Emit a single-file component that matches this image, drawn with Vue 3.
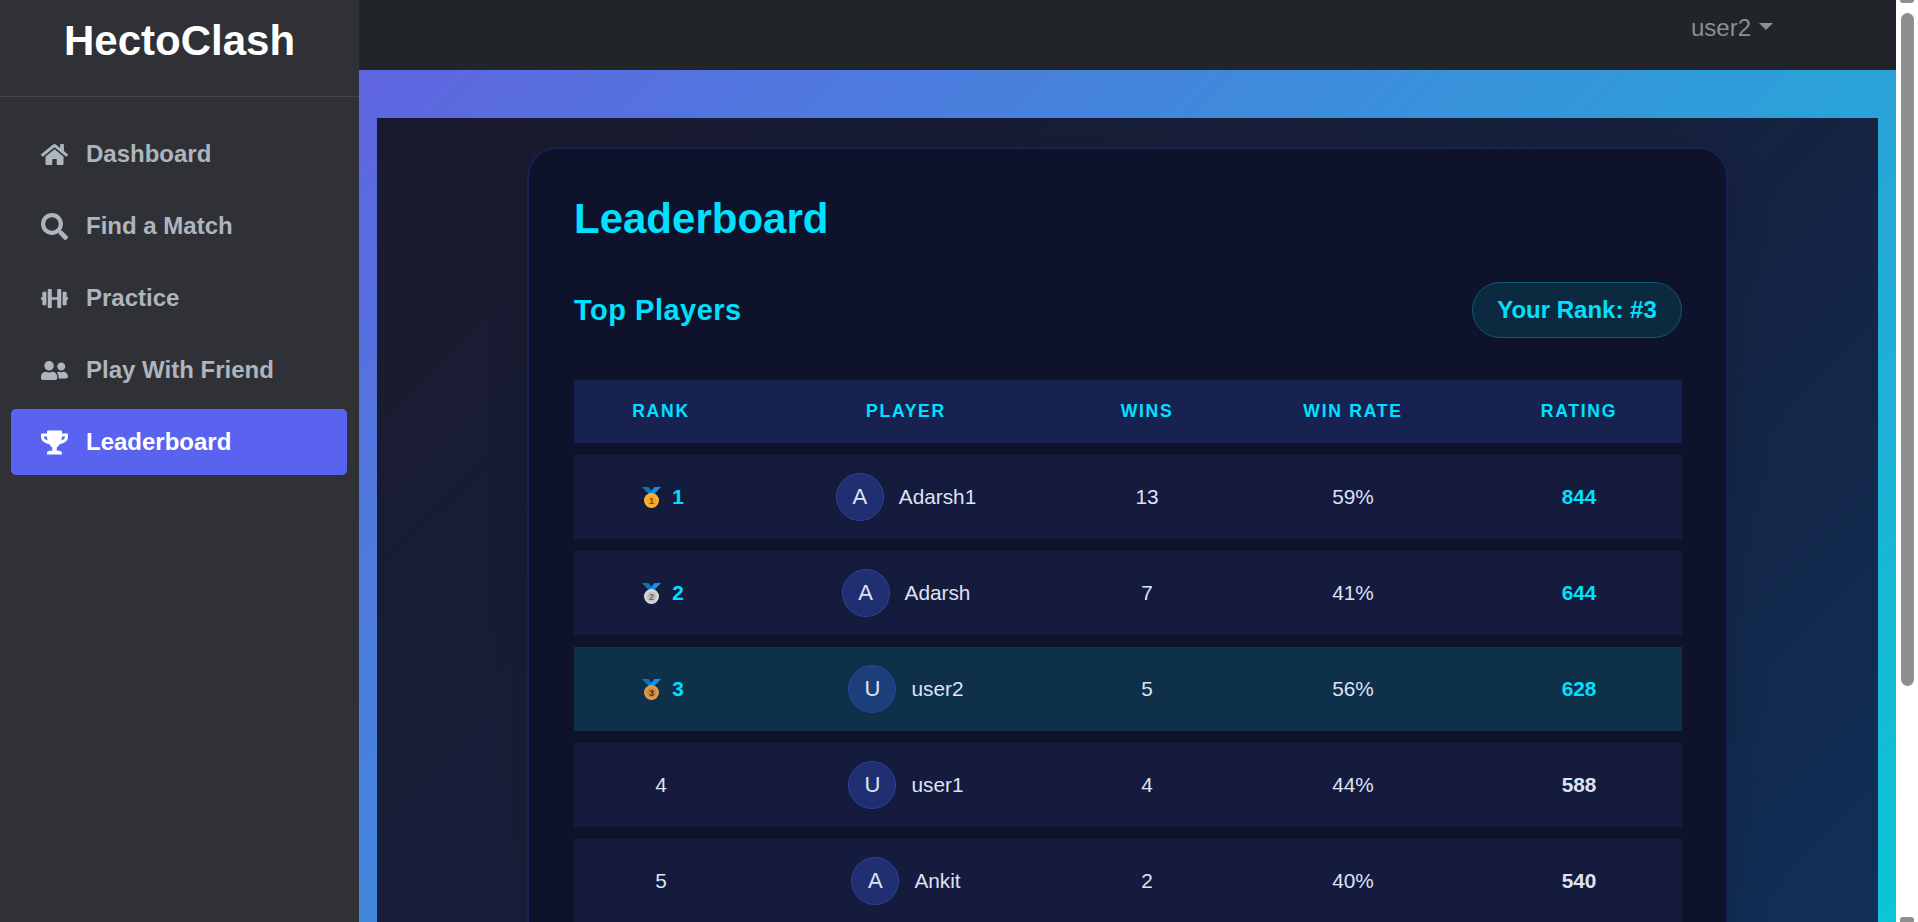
<template>
  <div class="app">
    <aside class="sidebar">
      <div class="brand">HectoClash</div>
      <nav class="side-nav">
        <a v-for="item in navItems" :key="item.label" class="nav-item" :class="{ active: item.active }">
          <svg class="nav-icon" :viewBox="item.box"><path :d="item.icon" /></svg>
          <span>{{ item.label }}</span>
        </a>
      </nav>
    </aside>

    <div class="main">
      <header class="topbar">
        <span class="user-menu">user2<i class="caret"></i></span>
      </header>
      <div class="content">
        <div class="panel">
          <section class="card">
            <h1>Leaderboard</h1>
            <div class="card-head">
              <h2>Top Players</h2>
              <div class="my-rank">Your Rank: #3</div>
            </div>
            <table>
              <colgroup>
                <col style="width: 174px">
                <col style="width: 316px">
                <col style="width: 166px">
                <col style="width: 246px">
                <col style="width: 206px">
              </colgroup>
              <thead>
                <tr>
                  <th>RANK</th>
                  <th>PLAYER</th>
                  <th>WINS</th>
                  <th>WIN RATE</th>
                  <th>RATING</th>
                </tr>
              </thead>
              <tbody>
                <tr v-for="p in players" :key="p.rank" :class="{ me: p.name === 'user2', top: p.rank <= 3 }">
                  <td class="rank">
                    <div class="rank-inner">
                      <svg v-if="p.rank <= 3" class="medal" viewBox="0 0 19 21">
                        <path d="M0 0h6.5l5 6-3 3z" fill="#0b74bd" />
                        <path d="M19 0h-6.5l-5 6 3 3z" fill="#1590e4" />
                        <circle cx="9.5" cy="13.5" r="7.5" :fill="medalColors[p.rank - 1][0]" />
                        <circle cx="9.5" cy="13.5" r="5" :fill="medalColors[p.rank - 1][1]" />
                        <text x="9.5" y="16.6" text-anchor="middle" class="medal-num" :class="'num-' + p.rank">{{ p.rank }}</text>
                      </svg>
                      <span>{{ p.rank }}</span>
                    </div>
                  </td>
                  <td>
                    <div class="player">
                      <span class="avatar">{{ p.name[0].toUpperCase() }}</span>
                      <span>{{ p.name }}</span>
                    </div>
                  </td>
                  <td>{{ p.wins }}</td>
                  <td>{{ p.rate }}</td>
                  <td class="rating">{{ p.rating }}</td>
                </tr>
              </tbody>
            </table>
          </section>
        </div>
      </div>
    </div>

    <div class="scrollbar">
      <i class="arrow up"></i>
      <div class="thumb"></div>
      <i class="arrow down"></i>
    </div>
  </div>
</template>

<script setup>
const navItems = [
  {
    label: 'Dashboard',
    box: '0 0 576 512',
    icon: 'M280.37 148.26L96 300.11V464a16 16 0 0 0 16 16l112.06-.29a16 16 0 0 0 15.92-16V368a16 16 0 0 1 16-16h64a16 16 0 0 1 16 16v95.64a16 16 0 0 0 16 16.05L464 480a16 16 0 0 0 16-16V300L295.67 148.26a12.19 12.19 0 0 0-15.3 0zM571.6 251.47L488 182.56V44.05a12 12 0 0 0-12-12h-56a12 12 0 0 0-12 12v72.61L318.47 43a48 48 0 0 0-61 0L4.34 251.47a12 12 0 0 0-1.6 16.9l25.5 31A12 12 0 0 0 45.15 301l235.22-193.74a12.19 12.19 0 0 1 15.3 0L530.9 301a12 12 0 0 0 16.9-1.6l25.5-31a12 12 0 0 0-1.7-16.93z'
  },
  {
    label: 'Find a Match',
    box: '0 0 512 512',
    icon: 'M505 442.7L405.3 343c-4.5-4.5-10.6-7-17-7H372c27.6-35.3 44-79.7 44-128C416 93.1 322.9 0 208 0S0 93.1 0 208s93.1 208 208 208c48.3 0 92.7-16.4 128-44v16.3c0 6.4 2.5 12.5 7 17l99.7 99.7c9.4 9.4 24.6 9.4 33.9 0l28.3-28.3c9.4-9.4 9.4-24.6.1-34zM208 336c-70.7 0-128-57.2-128-128 0-70.7 57.2-128 128-128 70.7 0 128 57.2 128 128 0 70.7-57.2 128-128 128z'
  },
  {
    label: 'Practice',
    box: '0 0 640 512',
    icon: 'M104 96H56c-13.3 0-24 10.7-24 24v104H8c-4.4 0-8 3.6-8 8v48c0 4.4 3.6 8 8 8h24v104c0 13.3 10.7 24 24 24h48c13.3 0 24-10.7 24-24V120c0-13.3-10.7-24-24-24zm528 128h-24V120c0-13.3-10.7-24-24-24h-48c-13.3 0-24 10.7-24 24v272c0 13.3 10.7 24 24 24h48c13.3 0 24-10.7 24-24V288h24c4.4 0 8-3.6 8-8v-48c0-4.4-3.6-8-8-8zM456 32h-48c-13.3 0-24 10.7-24 24v168H256V56c0-13.3-10.7-24-24-24h-48c-13.3 0-24 10.7-24 24v400c0 13.3 10.7 24 24 24h48c13.3 0 24-10.7 24-24V288h128v168c0 13.3 10.7 24 24 24h48c13.3 0 24-10.7 24-24V56c0-13.3-10.7-24-24-24z'
  },
  {
    label: 'Play With Friend',
    box: '0 0 640 512',
    icon: 'M192 256c61.9 0 112-50.1 112-112S253.9 32 192 32 80 82.1 80 144s50.1 112 112 112zm76.8 32h-8.3c-20.8 10-43.9 16-68.5 16s-47.6-6-68.5-16h-8.3C51.6 288 0 339.6 0 403.2V432c0 26.5 21.5 48 48 48h288c26.5 0 48-21.5 48-48v-28.8c0-63.6-51.6-115.2-115.2-115.2zM480 256c53 0 96-43 96-96s-43-96-96-96-96 43-96 96 43 96 96 96zm48 32h-3.8c-13.9 4.8-28.6 8-44.2 8s-30.3-3.2-44.2-8H432c-20.4 0-39.2 5.9-55.7 15.4 24.4 26.3 39.7 61.2 39.7 99.8v38.4c0 2.2-.5 4.3-.6 6.4H592c26.5 0 48-21.5 48-48 0-61.9-50.1-112-112-112z'
  },
  {
    label: 'Leaderboard',
    active: true,
    box: '0 0 576 512',
    icon: 'M552 64H448V24c0-13.3-10.7-24-24-24H152c-13.3 0-24 10.7-24 24v40H24C10.7 64 0 74.7 0 88v56c0 35.7 22.5 72.4 61.9 100.7 31.5 22.7 69.8 37.1 110 41.7C203.3 338.5 240 360 240 360v72h-48c-35.3 0-64 20.7-64 56v12c0 6.6 5.4 12 12 12h296c6.6 0 12-5.4 12-12v-12c0-35.3-28.7-56-64-56h-48v-72s36.7-21.5 68.1-73.6c40.3-4.6 78.6-19 110-41.7 39.3-28.3 61.9-65 61.9-100.7V88c0-13.3-10.7-24-24-24zM99.3 192.8C74.9 175.2 64 155.6 64 144v-16h64.2c1 32.6 5.8 61.2 12.8 86.2-15.1-5.2-29.2-12.4-41.7-21.4zM512 144c0 16.1-17.7 36.1-35.3 48.8-12.5 9-26.7 16.2-41.8 21.4 7-25 11.8-53.6 12.8-86.2H512v16z'
  }
]

const medalColors = [
  ['#ffb02e', '#f7a521'],
  ['#d6d6d6', '#c2c2c2'],
  ['#e09a4c', '#cf8a3e']
]

const players = [
  { rank: 1, name: 'Adarsh1', wins: 13, rate: '59%', rating: 844 },
  { rank: 2, name: 'Adarsh', wins: 7, rate: '41%', rating: 644 },
  { rank: 3, name: 'user2', wins: 5, rate: '56%', rating: 628 },
  { rank: 4, name: 'user1', wins: 4, rate: '44%', rating: 588 },
  { rank: 5, name: 'Ankit', wins: 2, rate: '40%', rating: 540 }
]
</script>

<style>
html, body {
  margin: 0;
  overflow: hidden;
}
</style>

<style scoped>
.app {
  display: flex;
  height: 100vh;
  overflow: hidden;
  font-family: "Liberation Sans", Arial, sans-serif;
  background: #fff;
}

/* sidebar */
.sidebar {
  flex: 0 0 359px;
  background: #303136;
}
.brand {
  height: 80px;
  padding-top: 16px;
  border-bottom: 1px solid #43454b;
  color: #fff;
  font-size: 42px;
  line-height: 50px;
  font-weight: 700;
  text-align: center;
}
.side-nav {
  display: flex;
  flex-direction: column;
  gap: 6px;
  padding: 24px 12px 0 11px;
}
.nav-item {
  display: flex;
  align-items: center;
  gap: 18px;
  height: 66px;
  padding-left: 30px;
  border-radius: 5px;
  color: #adb5bd;
  font-size: 24px;
  font-weight: 700;
}
.nav-item.active {
  background: #5a63f0;
  color: #fff;
}
.nav-icon {
  width: 27px;
  height: 27px;
  fill: currentColor;
}

/* top bar and page */
.main {
  flex: 1;
  min-width: 0;
  overflow: hidden;
}
.topbar {
  display: flex;
  justify-content: flex-end;
  height: 70px;
  background: #212529;
}
.user-menu {
  display: flex;
  align-items: center;
  height: 28px;
  margin: 14px 123px 0 0;
  color: #8c8e90;
  font-size: 24px;
}
.caret {
  width: 0;
  height: 0;
  margin: -3px 0 0 8px;
  border-top: 7px solid #8c8e90;
  border-left: 7px solid transparent;
  border-right: 7px solid transparent;
}
.content {
  height: 1119px;
  padding: 48px 18px 0;
  background: linear-gradient(135deg, #6065e0 0%, #00d2d3 100%);
}
.panel {
  height: 1090px;
  padding-top: 29px;
  background: linear-gradient(135deg, #1a1a2e 0%, #16213e 50%, #0f3460 100%);
}
.card {
  box-sizing: border-box;
  width: 1201px;
  margin: 0 auto;
  padding: 45px 44px 44px 45px;
  border: 2px solid #182250;
  border-radius: 30px;
  background: #0e132b;
  box-shadow: 0 8px 40px rgba(0, 0, 0, 0.14);
}
h1 {
  margin: 0 0 38px;
  color: #00e0ff;
  font-size: 42px;
  line-height: 50px;
  font-weight: 700;
}
.card-head {
  display: flex;
  align-items: center;
  justify-content: space-between;
  margin-bottom: 30px;
}
h2 {
  margin: 0;
  color: #00e0ff;
  font-size: 29px;
  line-height: 35px;
  font-weight: 700;
  letter-spacing: 0.5px;
}
.my-rank {
  box-sizing: border-box;
  width: 210px;
  height: 56px;
  border: 1px solid #0b5a72;
  border-radius: 28px;
  background: #0c2a3f;
  color: #00e0ff;
  font-size: 24px;
  line-height: 54px;
  font-weight: 700;
  text-align: center;
}

/* table */
table {
  width: 100%;
  table-layout: fixed;
  border-collapse: separate;
  border-spacing: 0 12px;
  color: #dfe2f3;
  font-size: 20.8px;
}
th {
  height: 63px;
  padding: 0;
  background: #182250;
  color: #00e0ff;
  font-size: 17.6px;
  font-weight: 700;
  letter-spacing: 1.7px;
}
td {
  height: 84px;
  padding: 0;
  background: #141b3d;
  text-align: center;
}
.me td {
  background: #0e3049;
}
.top .rank {
  color: #00e0ff;
  font-weight: 700;
}
.rank-inner {
  display: flex;
  align-items: center;
  justify-content: center;
}
.top .rank-inner {
  gap: 11px;
  padding-left: 4px;
}
.medal {
  width: 19px;
  height: 21px;
}
.medal-num {
  font-size: 9px;
  font-weight: 700;
}
.num-1 {
  fill: #7a4a10;
}
.num-2 {
  fill: #666;
}
.num-3 {
  fill: #4a2c12;
}
.player {
  display: flex;
  align-items: center;
  justify-content: center;
  gap: 15px;
}
.avatar {
  box-sizing: border-box;
  width: 48px;
  height: 48px;
  border: 1.5px solid #2d4394;
  border-radius: 50%;
  background: #1f2f72;
  font-size: 22px;
  line-height: 45px;
}
.me .avatar {
  background: #1c3f7c;
}
.rating {
  font-weight: 700;
}
.top .rating {
  color: #00e0ff;
}

/* page scrollbar */
.scrollbar {
  flex: 0 0 22px;
  display: flex;
  flex-direction: column;
  align-items: center;
  overflow: hidden;
  background: #fff;
}
.thumb {
  width: 13px;
  height: 673px;
  margin-top: 10px;
  border-radius: 7px;
  background: #8e8e8e;
}
.arrow {
  display: block;
  width: 14px;
  height: 3px;
  background: #8e8e8e;
}
.arrow.up {
  border-radius: 0 0 3px 3px;
}
.arrow.down {
  height: 5px;
  margin-top: auto;
  border-radius: 3px 3px 0 0;
}
</style>
